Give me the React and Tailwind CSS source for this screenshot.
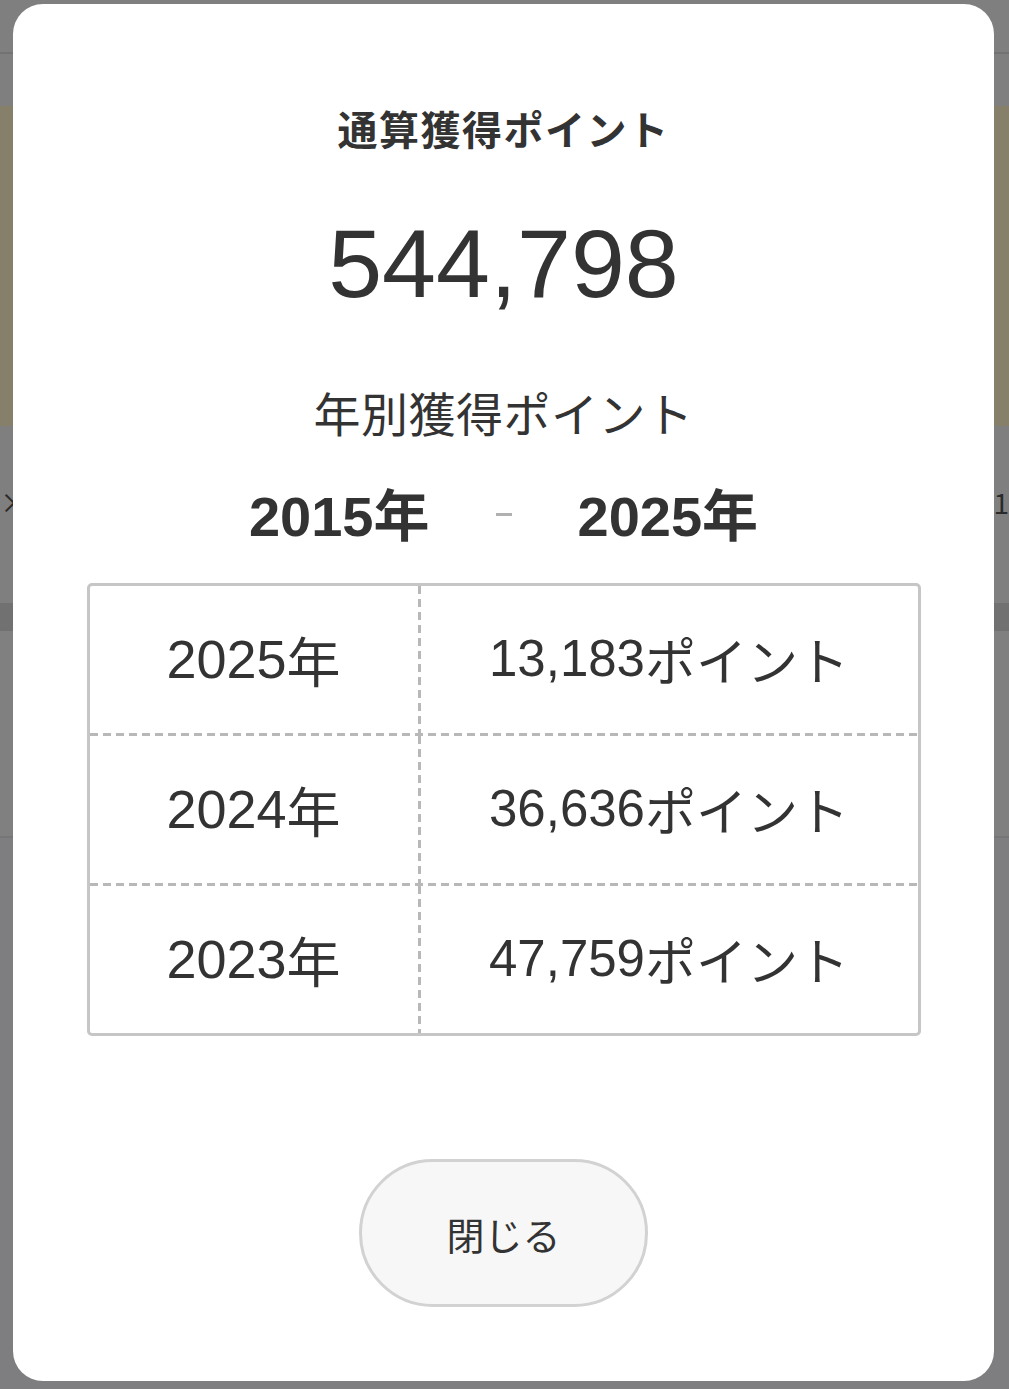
import React from "react";

const jp = { fontFamily: '"Noto Sans CJK JP", "Noto Sans", sans-serif' };
const num = { fontFamily: '"Liberation Sans", "Noto Sans CJK JP", sans-serif' };

const rows = [
  ["2025", "13,183"],
  ["2024", "36,636"],
  ["2023", "47,759"],
];

function Background() {
  return (
    <div className="flex flex-col w-full h-[1389px] bg-[#7f7f7f] overflow-hidden">
      <div className="h-[52px] shrink-0 bg-[#7f7f7f]" />
      <div className="h-[2px] shrink-0 bg-[#727272]" />
      <div className="h-[52px] shrink-0" />
      <div className="h-[320px] shrink-0 bg-[#867f69]" />
      <div className="h-[55px] shrink-0" />
      <div className="flex justify-between h-[80px] shrink-0 text-[#2a2a2a] text-[28px]" style={jp}>
        <span>×2</span>
        <span>1</span>
      </div>
      <div className="h-[42px] shrink-0" />
      <div className="h-[28px] shrink-0 bg-[#717171]" />
      <div className="h-[205px] shrink-0 bg-[#808080]" />
      <div className="h-[2px] shrink-0 bg-[#767676]" />
      <div className="flex-1 bg-[#7e7d80]" />
    </div>
  );
}

function HDash() {
  return (
    <div className="h-[3px] w-full shrink-0 bg-[repeating-linear-gradient(90deg,#b8b8b8_0px,#b8b8b8_8px,transparent_8px,transparent_13px)]" />
  );
}

function VDash() {
  return (
    <div className="w-[3px] self-stretch shrink-0 bg-[repeating-linear-gradient(180deg,#b8b8b8_0px,#b8b8b8_8px,transparent_8px,transparent_13px)]" />
  );
}

export default function App() {
  return (
    <div className="relative w-[1009px] h-[1389px] overflow-hidden">
      <Background />
      <div
        className="absolute left-[13px] top-[4px] w-[981px] h-[1377px] bg-white rounded-[30px] flex flex-col items-center text-[#333333]"
        style={jp}
      >
        <div className="pt-[100px] text-[40px] font-bold leading-[48px] tracking-[1.5px]">
          通算獲得ポイント
        </div>
        <div className="mt-[62px] text-[97px] leading-[100px]" style={num}>
          544,798
        </div>
        <div className="mt-[70px] text-[47px] leading-[56px] tracking-[0.5px]">年別獲得ポイント</div>
        <div className="mt-[42px] flex items-center h-[64px] font-bold text-[56px] leading-[64px]" style={num}>
          <span>
            2015<span style={jp}>年</span>
          </span>
          <span className="mx-[66px] w-[16px] h-[3px] bg-[#b0b0b0]" />
          <span>
            2025<span style={jp}>年</span>
          </span>
        </div>
        <div className="mt-[37px] w-[834px] border-[3px] border-[#c6c6c6] rounded-[5px] flex flex-col">
          {rows.map(([y, p], i) => (
            <React.Fragment key={y}>
              {i > 0 && <HDash />}
              <div className="flex h-[147px]">
                <div className="w-[328px] flex items-center justify-center text-[54px]" style={num}>
                  {y}
                  <span style={jp}>年</span>
                </div>
                <VDash />
                <div className="flex-1 flex items-center justify-center text-[51px]" style={num}>
                  {p}
                  <span style={jp}>ポイント</span>
                </div>
              </div>
            </React.Fragment>
          ))}
        </div>
        <button
          className="mt-[123px] w-[289px] h-[148px] rounded-full bg-[#f7f7f7] border-[3px] border-[#d2d2d2] text-[38px] text-[#333333] flex items-center justify-center"
          style={jp}
        >
          閉じる
        </button>
      </div>
    </div>
  );
}
